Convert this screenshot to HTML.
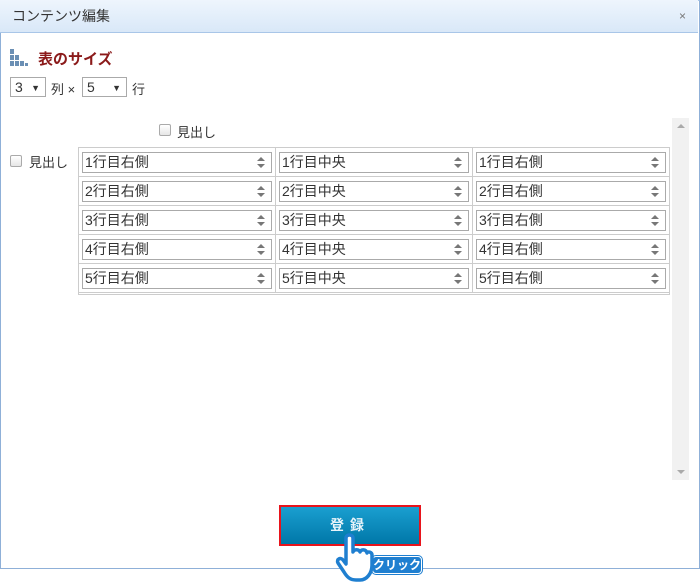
<!DOCTYPE html>
<html><head><meta charset="utf-8"><style>
*{box-sizing:border-box;margin:0;padding:0}
body{width:700px;height:579px;background:#fff;font-family:"Liberation Sans","Noto Sans CJK JP",sans-serif;position:relative;overflow:hidden;font-size:13px;color:#333}
.dlg{position:absolute;left:0;top:0;width:700px;height:569px;border:1px solid #8fb0d8;border-top:1px solid #a9c6e8}
.title{position:absolute;left:0;top:0;width:698px;height:33px;background:linear-gradient(#eef5fd,#d9e8f8);border-bottom:1px solid #a9c6e8;font-size:14px;line-height:33px;padding-left:12px;color:#333}
.x{position:absolute;right:12px;top:0;color:#777;font-size:12px}
.h{position:absolute;left:38px;top:48px;color:#8b1a1a;font-weight:bold;font-size:15px}
.sel{position:absolute;top:77px;height:20px;border:1px solid #aaa;background:#fff;font-size:14px;line-height:18px;padding-left:4px}
.sel i{position:absolute;right:5px;font-style:normal;font-size:9px}
.t{position:absolute;font-size:13px}
.cb{position:absolute;width:12px;height:12px;border:1px solid #aaa;background:linear-gradient(#fff,#e6e6e6);border-radius:2px}
.scr{position:absolute;left:672px;top:118px;width:17px;height:362px;background:#f1f1f1}
.tbl{position:absolute;left:78px;top:147px;width:592px;height:148px;border:1px solid #ccc}
.cell{position:absolute;width:197px;height:29px;border-right:1px solid #ccc;border-bottom:1px solid #ccc}
.inp{position:absolute;left:3px;top:4px;right:3px;height:21px;border:1px solid #aaa;font-size:14px;line-height:19px;padding-left:2px}
.sp{position:absolute;right:6px;top:3px;width:8px;height:13px}
.btn{position:absolute;left:279px;top:505px;width:142px;height:41px;border:2px solid #e8141c;background:linear-gradient(#1a9fd0,#0077a8);color:#e8f4fa;text-align:center;line-height:37px;font-size:14px;font-weight:bold;letter-spacing:6px}
.click{position:absolute;left:372px;top:556px;width:50px;height:18px;background:#1f7fd0;border:1px solid #fff;border-radius:4px;box-shadow:0 0 0 1px #1f7fd0;color:#fff;font-weight:bold;font-size:12px;line-height:16px;text-align:center}
</style></head><body>
<div class="dlg"></div>
<div class="title">コンテンツ編集<span class="x">×</span></div>
<svg style="position:absolute;left:10px;top:49px" width="20" height="18"><g fill="#6b8fb4"><rect x="0" y="0" width="4" height="5"/><rect x="0" y="6" width="4" height="5"/><rect x="5" y="6" width="4" height="5"/><rect x="0" y="12" width="4" height="5"/><rect x="5" y="12" width="4" height="5"/><rect x="10" y="12" width="4" height="5"/><rect x="15" y="14" width="3" height="3"/></g></svg>
<div class="h">表のサイズ</div>
<div class="sel" style="left:10px;width:36px">3<i style="top:1px">▼</i></div>
<div class="t" style="left:51px;top:79px">列 ×</div>
<div class="sel" style="left:82px;width:45px">5<i style="top:1px">▼</i></div>
<div class="t" style="left:132px;top:79px">行</div>
<div class="cb" style="left:159px;top:124px"></div><div class="t" style="left:177px;top:122px">見出し</div>
<div class="cb" style="left:10px;top:155px"></div><div class="t" style="left:29px;top:152px">見出し</div>
<div class="scr"><div style="position:absolute;left:5px;top:6px;border:4px solid transparent;border-bottom:4px solid #aaa;border-top:0"></div><div style="position:absolute;left:5px;bottom:6px;border:4px solid transparent;border-top:4px solid #aaa;border-bottom:0"></div></div>
<div class="tbl"></div>
<script>
var t=document.querySelector('.tbl'),h='';
var n=['右側','中央','右側'];
for(var r=0;r<5;r++)for(var c=0;c<3;c++){h+='<div class="cell" style="left:'+(c*197)+'px;top:'+(r*29)+'px"><div class="inp">'+(r+1)+'行目'+n[c]+'<svg class="sp" viewBox="0 0 8 13"><path d="M0 5L4 1L8 5Z M0 8L4 12L8 8Z" fill="#777"/></svg></div></div>';}
t.innerHTML=h;
</script>
<div class="btn">登録</div>
<div class="click">クリック</div>
<svg style="position:absolute;left:334px;top:532px" width="42" height="50" viewBox="0 0 42 50"><path d="M12 6c0-4 7-4 7 0v14c1-3 6-3 7 0c1-3 6-3 7 1c1-2 5-1 5 2v10c0 8-5 15-12 15h-4c-6 0-9-3-12-8l-6-9c-2-4 3-6 5-3l3 4z" fill="#fff" stroke="#1f7fd0" stroke-width="3.5" stroke-linejoin="round"/></svg>
</body></html>
